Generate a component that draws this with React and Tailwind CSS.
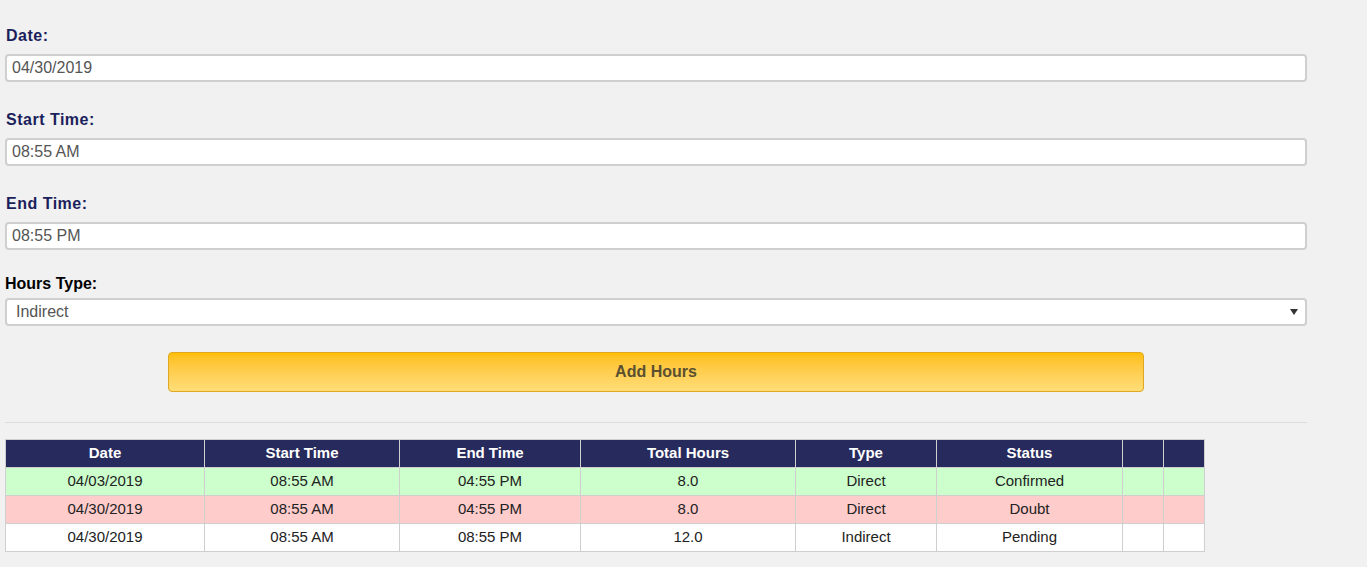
import React from "react";

const rows = [
    { date: "04/03/2019", start: "08:55 AM", end: "04:55 PM", total: "8.0", type: "Direct", status: "Confirmed", bg: "bg-[#ccffcc]" },
    { date: "04/30/2019", start: "08:55 AM", end: "04:55 PM", total: "8.0", type: "Direct", status: "Doubt", bg: "bg-[#ffcccc]" },
    { date: "04/30/2019", start: "08:55 AM", end: "08:55 PM", total: "12.0", type: "Indirect", status: "Pending", bg: "bg-white" },
];

const cols = ["w-[199px]", "w-[195px]", "w-[181px]", "w-[215px]", "w-[141px]", "w-[186px]", "w-[41px]", "w-[41px]"];
const heads = ["Date", "Start Time", "End Time", "Total Hours", "Type", "Status", "", ""];

function Field({ label, value, wrap = "mb-[28px]" }) {
    return (
        <div className={wrap}>
            <div className="h-[20px] leading-[20px] text-[16px] tracking-[0.5px] font-bold pl-[1px] mb-[8px] text-[#1b1f5c]">{label}</div>
            <div className="h-[28px] bg-white border-2 border-[#cfcfcf] rounded-[4px] flex items-center px-[5px] text-[16px] text-[#555]">
                {value}
            </div>
        </div>
    );
}

export default function App() {
    return (
        <div className="min-h-[567px] bg-[#f1f1f1] px-[5px] pt-[26px] font-['Liberation_Sans',Arial,sans-serif]">
            <div className="w-[1302px]">
                <Field label="Date:" value="04/30/2019" />
                <Field label="Start Time:" value="08:55 AM" />
                <Field label="End Time:" value="08:55 PM" wrap="mb-[24px]" />

                {/* hours type select */}
                <div className="mb-[26px]">
                    <div className="h-[20px] leading-[20px] text-[16px] font-bold text-black mb-[4px]">Hours Type:</div>
                    <div className="h-[28px] bg-white border-2 border-[#cfcfcf] rounded-[4px] flex items-center justify-between pl-[9px] pr-[7px] text-[16px] text-[#555]">
                        <span>Indirect</span>
                        <svg width="8" height="6" viewBox="0 0 8 6"><path d="M0 0h8L4 6z" fill="#333" /></svg>
                    </div>
                </div>

                <div className="flex justify-center">
                    <button className="w-[976px] h-[40px] rounded-[4px] border border-[#e0a820] bg-gradient-to-b from-[#ffbf00] to-[#ffdd77] text-[16px] font-bold text-[#5a5030]">
                        Add Hours
                    </button>
                </div>

                <div className="mt-[30px] mb-[16px] border-t border-[#dcdcdc]" />

                <table className="border-collapse text-[15px] text-center">
                    <thead>
                        <tr className="bg-[#262a5c] text-white h-[28px]">
                            {heads.map((h, i) => (
                                <th key={i} className={`${cols[i]} border border-[#cfcfcf] font-bold p-0`}>{h}</th>
                            ))}
                        </tr>
                    </thead>
                    <tbody>
                        {rows.map((r, i) => (
                            <tr key={i} className={`${r.bg} h-[28px] text-[#222]`}>
                                {[r.date, r.start, r.end, r.total, r.type, r.status, "", ""].map((c, j) => (
                                    <td key={j} className="border border-[#cfcfcf] p-0">{c}</td>
                                ))}
                            </tr>
                        ))}
                    </tbody>
                </table>
            </div>
        </div>
    );
}
